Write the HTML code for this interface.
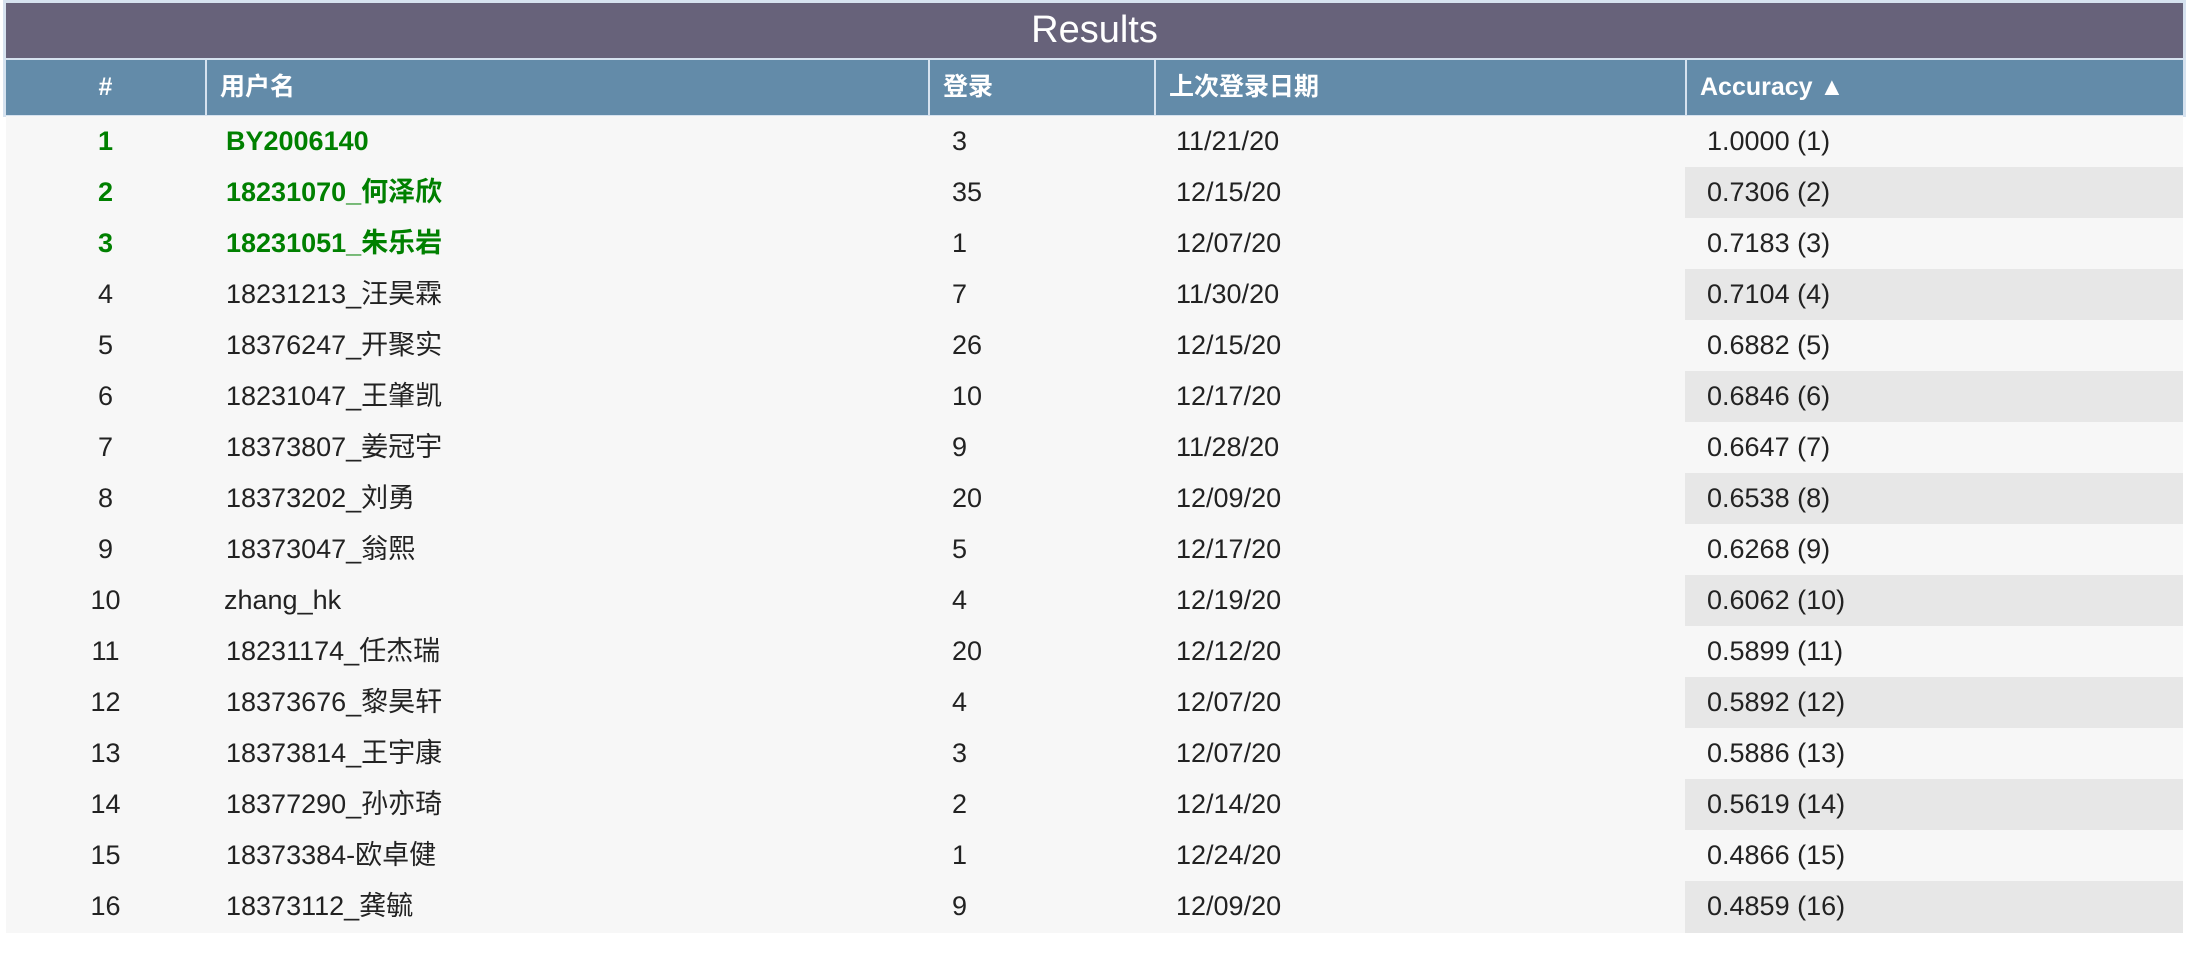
<!DOCTYPE html>
<html><head><meta charset="utf-8"><style>
*{margin:0;padding:0;box-sizing:border-box}
body{width:2212px;height:958px;background:#fff;position:relative;overflow:hidden;font-family:"Liberation Sans","Noto Sans CJK SC",sans-serif}
.frame{position:absolute;left:3px;top:0;width:2183px;height:117px;background:#d6e2ef}
.title{position:absolute;left:6px;top:3px;width:2177px;height:55px;background:#67627a;color:#fff;font-size:38px;text-align:center;line-height:55px}
.hd{position:absolute;top:60px;height:55px;background:#638ba9;color:#fff;font-weight:bold;font-size:25px;line-height:55px;padding-left:13px}
.row{position:absolute;left:6px;width:2177px;height:52px;background:#f7f7f7;color:#222;font-size:27px}
.row div{position:absolute;top:0;height:52px;line-height:51px}
.g{color:#008000;font-weight:bold}
.c0{left:0;width:199px;text-align:center}
.c1{left:220px}
.c2{left:946px}
.c3{left:1170px}
.c4{left:1679px;width:498px;padding-left:22px}
.sh{background:#e7e7e7}
</style></head><body>
<div class="frame"></div>
<div class="title">Results</div>
<div class="hd" style="left:6px;width:199px;padding-left:0;text-align:center">#</div>
<div class="hd" style="left:207px;width:721px">用户名</div>
<div class="hd" style="left:930px;width:224px">登录</div>
<div class="hd" style="left:1156px;width:529px">上次登录日期</div>
<div class="hd" style="left:1687px;width:496px">Accuracy ▲</div>

<div class="row g" style="top:116px"><div class="c0">1</div><div class="c1">BY2006140</div><div class="c2" style="color:#222;font-weight:normal">3</div><div class="c3" style="color:#222;font-weight:normal">11/21/20</div><div class="c4" style="color:#222;font-weight:normal">1.0000 (1)</div></div>
<div class="row g" style="top:167px"><div class="c0">2</div><div class="c1">18231070_何泽欣</div><div class="c2" style="color:#222;font-weight:normal">35</div><div class="c3" style="color:#222;font-weight:normal">12/15/20</div><div class="c4 sh" style="color:#222;font-weight:normal">0.7306 (2)</div></div>
<div class="row g" style="top:218px"><div class="c0">3</div><div class="c1">18231051_朱乐岩</div><div class="c2" style="color:#222;font-weight:normal">1</div><div class="c3" style="color:#222;font-weight:normal">12/07/20</div><div class="c4" style="color:#222;font-weight:normal">0.7183 (3)</div></div>
<div class="row" style="top:269px"><div class="c0">4</div><div class="c1">18231213_汪昊霖</div><div class="c2">7</div><div class="c3">11/30/20</div><div class="c4 sh">0.7104 (4)</div></div>
<div class="row" style="top:320px"><div class="c0">5</div><div class="c1">18376247_开聚实</div><div class="c2">26</div><div class="c3">12/15/20</div><div class="c4">0.6882 (5)</div></div>
<div class="row" style="top:371px"><div class="c0">6</div><div class="c1">18231047_王肇凯</div><div class="c2">10</div><div class="c3">12/17/20</div><div class="c4 sh">0.6846 (6)</div></div>
<div class="row" style="top:422px"><div class="c0">7</div><div class="c1">18373807_姜冠宇</div><div class="c2">9</div><div class="c3">11/28/20</div><div class="c4">0.6647 (7)</div></div>
<div class="row" style="top:473px"><div class="c0">8</div><div class="c1">18373202_刘勇</div><div class="c2">20</div><div class="c3">12/09/20</div><div class="c4 sh">0.6538 (8)</div></div>
<div class="row" style="top:524px"><div class="c0">9</div><div class="c1">18373047_翁熙</div><div class="c2">5</div><div class="c3">12/17/20</div><div class="c4">0.6268 (9)</div></div>
<div class="row" style="top:575px"><div class="c0">10</div><div class="c1" style="left:218px">zhang_hk</div><div class="c2">4</div><div class="c3">12/19/20</div><div class="c4 sh">0.6062 (10)</div></div>
<div class="row" style="top:626px"><div class="c0">11</div><div class="c1">18231174_任杰瑞</div><div class="c2">20</div><div class="c3">12/12/20</div><div class="c4">0.5899 (11)</div></div>
<div class="row" style="top:677px"><div class="c0">12</div><div class="c1">18373676_黎昊轩</div><div class="c2">4</div><div class="c3">12/07/20</div><div class="c4 sh">0.5892 (12)</div></div>
<div class="row" style="top:728px"><div class="c0">13</div><div class="c1">18373814_王宇康</div><div class="c2">3</div><div class="c3">12/07/20</div><div class="c4">0.5886 (13)</div></div>
<div class="row" style="top:779px"><div class="c0">14</div><div class="c1">18377290_孙亦琦</div><div class="c2">2</div><div class="c3">12/14/20</div><div class="c4 sh">0.5619 (14)</div></div>
<div class="row" style="top:830px"><div class="c0">15</div><div class="c1">18373384-欧卓健</div><div class="c2">1</div><div class="c3">12/24/20</div><div class="c4">0.4866 (15)</div></div>
<div class="row" style="top:881px"><div class="c0">16</div><div class="c1">18373112_龚毓</div><div class="c2">9</div><div class="c3">12/09/20</div><div class="c4 sh">0.4859 (16)</div></div>
</body></html>
